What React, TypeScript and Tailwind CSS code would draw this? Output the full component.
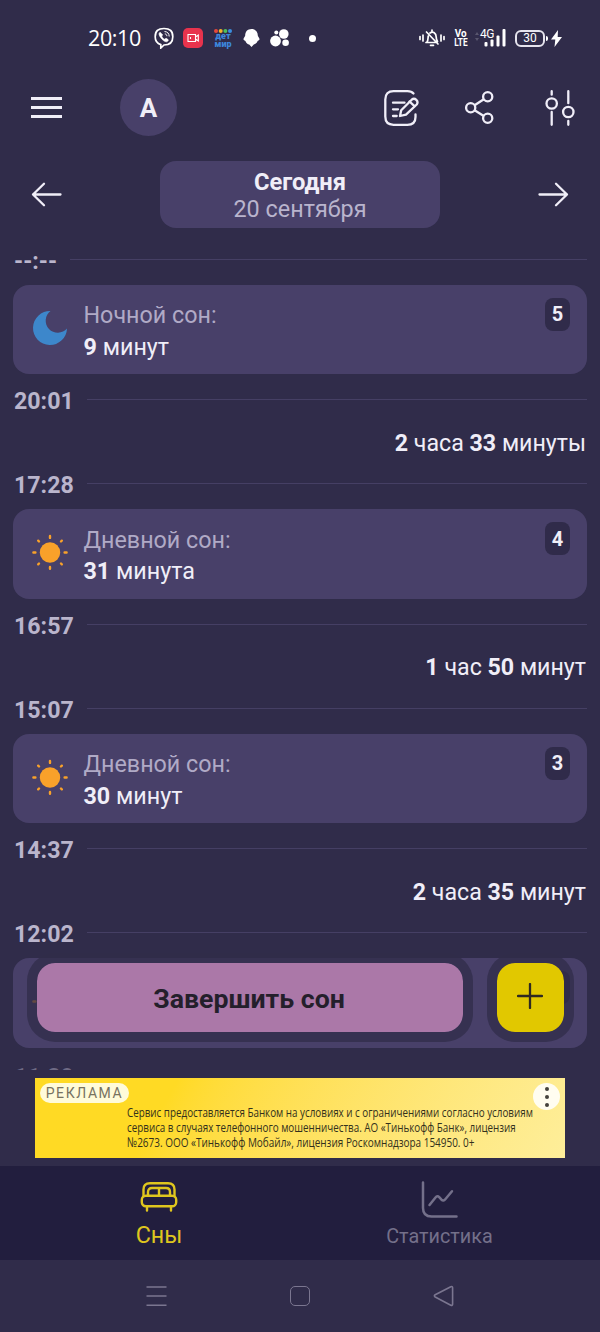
import React from 'react';

type Sleep = {
  id: number;
  kind: 'night' | 'day';
  title: string;
  amount: string;
  unit: string;
  start: string;
};

const sleeps: Sleep[] = [
  { id: 5, kind: 'night', title: 'Ночной сон:', amount: '9', unit: 'минут', start: '20:01' },
  { id: 4, kind: 'day', title: 'Дневной сон:', amount: '31', unit: 'минута', start: '16:57' },
  { id: 3, kind: 'day', title: 'Дневной сон:', amount: '30', unit: 'минут', start: '14:37' },
];

const awake = [
  { hours: '2', hoursUnit: 'часа', minutes: '33', minutesUnit: 'минуты', until: '17:28' },
  { hours: '1', hoursUnit: 'час', minutes: '50', minutesUnit: 'минут', until: '15:07' },
  { hours: '2', hoursUnit: 'часа', minutes: '35', minutesUnit: 'минут', until: '12:02' },
];

function StatusBar() {
  return (
    <div className="h-[76px] shrink-0 flex items-center pl-[88px] pr-[38px] text-white">
      <span className="w-[66px] text-[21.500px] leading-none font-['Open_Sans',sans-serif] tracking-[-0.4px]">20:10</span>
      <svg className="mr-[9px]" width="20" height="22" viewBox="0 0 20 22" fill="none" stroke="currentColor" strokeWidth="1.7">
        <path d="M10 1.5c6 0 8.800 2.200 8.800 8.200s-2.800 8.300-8.800 8.300l-3.200 3v-3.400C2.800 16.500 1.200 14.500 1.200 9.700 1.200 3.700 4 1.500 10 1.500z" />
        <path d="M6 5.200c-1.700 1-1 3 .6 5.300 1.700 2.500 4.200 4.400 6 4.300 1.200-.3 2.200-1.500 1.500-2.200l-2-1.400-1.400 1C9 11.500 8 10 7.700 8.900l1.100-1z" fill="currentColor" strokeWidth=".6" />
        <path d="M10.500 4.500c3 .2 4.700 2 4.700 5M10.800 6.900c1.400.1 2 .9 2.100 2.300" strokeWidth="1" />
      </svg>
      <svg className="mr-[10px]" width="20" height="20" viewBox="0 0 20 20" fill="none">
        <rect width="20" height="20" rx="5" fill="#e8334d" />
        <path d="M5 6.500h7.500v7H5zM12.500 9l2.800-2v6l-2.800-2M7.500 9v2" stroke="#fff" strokeWidth="1.100" />
      </svg>
      <div className="w-[20px] mr-[10px] flex flex-col items-center">
        <svg width="18" height="4" viewBox="0 0 18 4">
          <circle cx="2" cy="2" r="2" fill="#e5483c" />
          <circle cx="6.700" cy="2" r="2" fill="#f3b52a" />
          <circle cx="11.400" cy="2" r="2" fill="#4fbf5a" />
          <circle cx="16" cy="2" r="2" fill="#3b8ee0" />
        </svg>
        <span className="text-[9px] leading-[7px] font-black text-[#3c86dc]">дет</span>
        <span className="text-[9px] leading-[8px] font-black text-[#3c86dc]">мир</span>
      </div>
      <svg className="mr-[10px]" width="17" height="18" viewBox="0 0 17 18" fill="currentColor">
        <path d="M8.500 0c4 0 6.300 2.800 6.300 6.500 0 1.200 2 2.500 1.700 4-.3 1-1.700 1-2 1.700-.7 1.800-2.200 2.900-3.700 3.400L8.500 18l-2.300-2.400c-1.500-.5-3-1.600-3.700-3.400-.3-.7-1.700-.7-2-1.700-.3-1.500 1.700-2.800 1.700-4C2.200 2.800 4.500 0 8.500 0z" />
      </svg>
      <svg className="mr-[19px]" width="20" height="18" viewBox="0 0 20 18" fill="currentColor">
        <circle cx="5.500" cy="12" r="5.400" />
        <circle cx="13.800" cy="5" r="4.800" />
        <circle cx="15.600" cy="13.700" r="3.300" />
        <circle cx="6.300" cy="3.600" r="2" />
      </svg>
      <span className="size-[7px] rounded-full bg-white" />

      <div className="ml-auto flex items-center">
        <svg className="mr-[9px]" width="26" height="18" viewBox="0 0 26 18" fill="none" stroke="currentColor" strokeWidth="1.700" strokeLinecap="round">
          <path d="M1 7.500v3M4 6v6M22 6v6M25 7.500v3M7.500 3l11.500 12M7 13.500h10M8 13c1.200-1.500 1-3.500 1.200-6M11 4c3-2 6.200-.2 6.200 4 0 2 .3 3 1.300 4.500M13 1v1M11.500 16.300h3" />
        </svg>
        <div className="w-[13px] mr-[8px] flex flex-col items-center text-[11px] leading-[9px] font-bold">
          <span className="scale-x-90">Vo</span>
          <span className="scale-x-75">LTE</span>
        </div>
        <div className="relative w-[31px] h-[18px] mr-[9px]">
          <svg width="31" height="18" viewBox="0 0 31 18" fill="currentColor">
            <path d="M0 6l2-3 2 3zM0 9l2 3 2-3z" opacity=".2" />
            <rect x="9.500" y="13" width="3" height="4.500" rx="1" />
            <rect x="15.500" y="10.500" width="3" height="7" rx="1" />
            <rect x="21.500" y="6.500" width="3" height="11" rx="1" />
            <rect x="27.500" y="0" width="3" height="17.500" rx="1" />
          </svg>
          <span className="absolute left-[5px] top-0 text-[12px] leading-[10px] tracking-[-0.5px]">4G</span>
        </div>
        <div className="w-[30px] h-[17px] rounded-[6px] border-2 border-[#e6e4ee] flex items-center justify-center text-[12px] leading-none">30</div>
        <span className="w-[2px] h-[5px] ml-px mr-[3px] rounded-r bg-white" />
        <svg width="11" height="17" viewBox="0 0 11 17" fill="currentColor">
          <path d="M7 0L0 9.500h4.300L3.500 17 11 7H6.700z" />
        </svg>
      </div>
    </div>
  );
}

function MainHeader() {
  return (
    <header className="h-[62px] shrink-0 flex items-center pl-[31px] pr-[25px]">
      <div className="w-[31px] mr-[58px] flex flex-col gap-[6px]">
        <span className="h-[3px] bg-current" />
        <span className="h-[3px] bg-current" />
        <span className="h-[3px] bg-current" />
      </div>
      <div className="size-[57px] rounded-full bg-[#484069] flex items-center justify-center text-[26px] leading-none font-bold pt-px">А</div>
      <div className="ml-auto flex items-center pt-[2px]">
        <svg className="mr-[46px]" width="35" height="36" viewBox="0 0 35 36" fill="none" stroke="currentColor" strokeWidth="2.300" strokeLinecap="round" strokeLinejoin="round">
          <path d="M29.500 3.500Q27.500 1.200 23.500 1.200H9.500Q1.300 1.200 1.300 9.400V26.600Q1.300 34.800 9.500 34.800H23.300Q31.500 34.800 31.500 27V24.500" />
          <path d="M16 26l1.200-5.700L27.700 9.700a3.500 3.500 0 0 1 5 4.800L22 24.600z" />
          <path d="M25.500 11.500l5 4.700" />
          <path d="M9 12.700h11.500M9 19.300h5M9 26h3.700" />
        </svg>
        <svg className="mr-[51px]" width="29" height="36" viewBox="0 0 29 36" fill="none" stroke="currentColor" strokeWidth="2.300">
          <circle cx="5.700" cy="17.700" r="4.600" />
          <circle cx="22.700" cy="6.700" r="4.600" />
          <circle cx="22.700" cy="28.300" r="4.600" />
          <path d="M9.600 15.200l9.200-6M9.600 20.300l9.200 5.700" />
        </svg>
        <svg width="30" height="36" viewBox="0 0 30 36" fill="none" stroke="currentColor" strokeWidth="2.300" strokeLinecap="round">
          <circle cx="6.700" cy="13.500" r="5.200" />
          <circle cx="23.300" cy="22" r="5.200" />
          <path d="M6.700 1.200v3.500M6.700 22v12.800M23.300 1.200v12M23.300 31v3.800" />
        </svg>
      </div>
    </header>
  );
}

function DateSwitcher() {
  return (
    <div className="mt-[23px] h-[67px] shrink-0 flex items-center justify-between px-[31px]">
      <svg width="31" height="26" viewBox="0 0 31 26" fill="none" stroke="currentColor" strokeWidth="2.300" strokeLinecap="round" strokeLinejoin="round">
        <path d="M29.500 12.500H2M13 1.700L2 12.500l11 10.800" />
      </svg>
      <div className="w-[280px] h-full rounded-[16px] bg-[#484069] flex flex-col items-center justify-center pt-[2px]">
        <span className="text-[23.700px] leading-[27px] font-bold">Сегодня</span>
        <span className="text-[23.400px] leading-[27px] text-[#b9b4cd]">20 сентября</span>
      </div>
      <svg width="31" height="26" viewBox="0 0 31 26" fill="none" stroke="currentColor" strokeWidth="2.300" strokeLinecap="round" strokeLinejoin="round">
        <path d="M1.500 12.500H29M18 1.700L29 12.500 18 23.300" />
      </svg>
    </div>
  );
}

function TimeMark({ time }: { time: string }) {
  return (
    <div className="h-[51.250px] shrink-0 flex items-center gap-[14px]">
      <span className="pt-[4px] pl-px -mr-px text-[23.200px] leading-none font-bold text-[#bab5cc]">{time}</span>
      <span className="flex-1 h-px bg-[#453f64]" />
    </div>
  );
}

function Moon() {
  return (
    <svg width="36" height="36" viewBox="0 0 36 36">
      <path d="M18.500 1A17 17 0 1 0 35 18.500 12.100 12.100 0 1 1 18.500 1z" fill="#3d87cb" />
    </svg>
  );
}

function Sun() {
  return (
    <svg width="36" height="36" viewBox="0 0 36 36" stroke="#f9a12a" strokeWidth="2.400" strokeLinecap="round">
      <circle cx="18" cy="18.500" r="10.200" fill="#f9a12a" stroke="none" />
      <path d="M18 1.900v2M18 33v1.800M1.400 18.500h2M32.600 18.500h2M6.200 6.700l.8.800M29 29.500l.8.800M6.200 30.300l.8-.8M29 7.500l.8-.8" />
    </svg>
  );
}

function SleepCard({ sleep }: { sleep: Sleep }) {
  return (
    <div className="h-[89.500px] shrink-0 rounded-[16px] bg-[#484069] flex items-start pl-[19px] pr-[17px]">
      <div className="mt-[25px] mr-[15.500px]">{sleep.kind === 'night' ? <Moon /> : <Sun />}</div>
      <div className="flex-1 pt-[15.500px] text-[23.300px] leading-[31.300px]">
        <p className="text-[#b0aac6]">{sleep.title}</p>
        <p>
          <b>{sleep.amount}</b> {sleep.unit}
        </p>
      </div>
      <span className="mt-[13px] w-[25px] h-[33px] rounded-[8px] bg-[#302b4a] flex items-center justify-center text-[20px] font-bold">{sleep.id}</span>
    </div>
  );
}

function SleepList() {
  return (
    <main className="relative mt-[5.500px] h-[836.500px] shrink-0 overflow-hidden px-[13px] flex flex-col">
      <TimeMark time="--:--" />
      {sleeps.map((sleep, i) => (
        <React.Fragment key={sleep.id}>
          <SleepCard sleep={sleep} />
          <TimeMark time={sleep.start} />
          <p className="h-[32.500px] shrink-0 pr-px text-right text-[23.200px] leading-[34px]">
            <b>{awake[i].hours}</b> {awake[i].hoursUnit} <b>{awake[i].minutes}</b> {awake[i].minutesUnit}
          </p>
          <TimeMark time={awake[i].until} />
        </React.Fragment>
      ))}
      <SleepCard sleep={{ id: 2, kind: 'day', title: '', amount: '', unit: '', start: '' }} />
      <div className="pt-[2px] opacity-45">
        <TimeMark time="11:29" />
      </div>

      {/* floating actions */}
      <div className="absolute left-[27px] top-[719.500px] flex gap-[14px]">
        <button className="w-[446px] h-[89px] rounded-[28px] border-[10px] border-[#302c4a]/75 bg-clip-padding bg-[#ab78a8] text-[#241f2b] text-[26.700px] font-bold pt-[3px] pr-[2px]">
          Завершить сон
        </button>
        <button className="w-[87px] h-[89px] rounded-[28px] border-[10px] border-[#302c4a]/75 bg-clip-padding bg-[#e1c800] flex items-center justify-center pb-[3px] pr-px">
          <svg width="26" height="26" viewBox="0 0 26 26" stroke="#2f2a22" strokeWidth="2.300" strokeLinecap="round">
            <path d="M13 1v24M1 13h24" />
          </svg>
        </button>
      </div>
    </main>
  );
}

function AdBanner() {
  return (
    <div className="mt-2 mx-[35px] h-[80px] shrink-0 bg-linear-120 from-[#ffda24] from-25% to-[#feee9a] flex items-start px-[5px] pt-[5px] text-[#33301c]">
      <span className="w-[89px] h-[20px] shrink-0 rounded-full bg-[#fffbd9] flex items-center justify-center text-[14px] tracking-[1.600px] text-[#77725f]">РЕКЛАМА</span>
      <div className="w-[406px] pt-[21.500px] -ml-[2px] flex flex-col items-start whitespace-nowrap text-[13.500px] leading-[15px] font-['Open_Sans',sans-serif] font-medium">
        <span className="origin-left scale-x-[0.728]">Сервис предоставляется Банком на условиях и с ограничениями согласно условиям</span>
        <span className="origin-left scale-x-[0.728]">сервиса в случаях телефонного мошенничества. АО «Тинькофф Банк», лицензия</span>
        <span className="origin-left scale-x-[0.738]">№2673. ООО «Тинькофф Мобайл», лицензия Роскомнадзора 154950. 0+</span>
      </div>
      <div className="size-[27px] shrink-0 rounded-full bg-[#fffdf0] flex flex-col items-center justify-center gap-[4px]">
        <span className="size-[4px] rounded-full bg-[#44423c]" />
        <span className="size-[4px] rounded-full bg-[#44423c]" />
        <span className="size-[4px] rounded-full bg-[#44423c]" />
      </div>
    </div>
  );
}

function TabBar() {
  return (
    <nav className="mt-2 h-[94px] shrink-0 bg-[#221e3e] flex pl-[19px] pr-[21px]">
      <div className="flex-1 flex flex-col items-center pt-[15px] text-[#dfc61e]">
        <svg width="38" height="32" viewBox="0 0 38 32" fill="none" stroke="currentColor" strokeWidth="2.400" strokeLinecap="round">
          <path d="M3.500 15V8.500Q3.500 2.200 10 2.200H28Q34.500 2.200 34.500 8.500V15" />
          <path d="M8 14.500V11Q8 7 12 7H26Q30 7 30 11V14.500M19 7v7.500" />
          <rect x="1.800" y="14.800" width="34.400" height="10.400" rx="4" />
          <path d="M7 25.500v4M31 25.500v4" />
        </svg>
        <span className="mt-[7px] text-[23.300px] leading-[30px]">Сны</span>
      </div>
      <div className="flex-1 flex flex-col items-center pt-[15px] text-[#74708a]">
        <svg width="38" height="38" viewBox="0 0 38 38" fill="none" stroke="currentColor" strokeWidth="2.500" strokeLinecap="round" strokeLinejoin="round">
          <path d="M3 1.500V27Q3 35.500 11.500 35.500H36.500" />
          <path d="M9.500 24L15.500 16.500Q17.300 14.300 19.200 16.200L21.500 18.700Q23.500 20.500 25.300 18.300L32 10.200" />
        </svg>
        <span className="mt-[4px] pl-px text-[19.800px] leading-[28px]">Статистика</span>
      </div>
    </nav>
  );
}

function SystemNav() {
  return (
    <div className="h-[72px] shrink-0 flex items-center justify-between px-[146px] text-[#7b7690]">
      <svg width="21" height="22" viewBox="0 0 21 22" stroke="currentColor" strokeWidth="1.600">
        <path d="M.5 2h20M.5 11h20M.5 20.300h20" />
      </svg>
      <span className="size-[20px] rounded-[5px] border-[1.500px] border-current" />
      <svg width="21" height="22" viewBox="0 0 21 22" fill="none" stroke="currentColor" strokeWidth="1.600" strokeLinejoin="round">
        <path d="M17.800 1.700L2.200 9.800q-1.700 1 0 2.200l15.600 8.200q1.800.6 1.800-1V2.700q0-1.600-1.800-1z" />
      </svg>
    </div>
  );
}

export default function App() {
  return (
    <div className="w-[600px] h-[1332px] overflow-hidden flex flex-col bg-[#302c4a] text-[#f0eef8] font-[Roboto,sans-serif]">
      <StatusBar />
      <MainHeader />
      <DateSwitcher />
      <SleepList />
      <AdBanner />
      <TabBar />
      <SystemNav />
    </div>
  );
}
